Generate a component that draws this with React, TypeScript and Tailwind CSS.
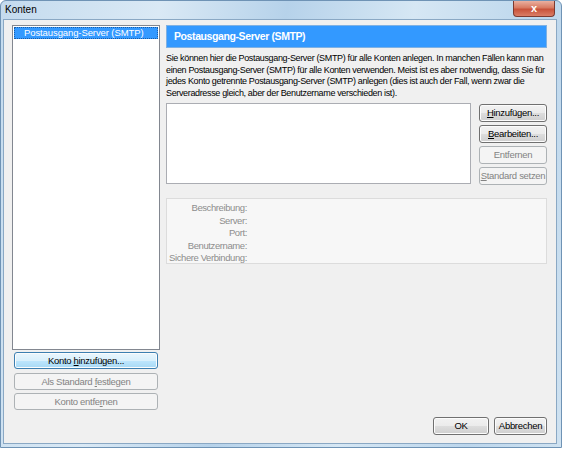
import type { ReactNode } from 'react';

const font = { fontFamily: '"Liberation Sans", Arial, sans-serif' };

type BtnProps = {
  children: ReactNode;
  disabled?: boolean;
  hot?: boolean;
  className?: string;
};

function Btn({ children, disabled, hot, className = '' }: BtnProps) {
  let look =
    'border-[#707070] text-black bg-[linear-gradient(#f2f2f2_0%,#ebebeb_50%,#dddddd_51%,#cfcfcf_100%)] shadow-[inset_0_0_0_1px_#fcfcfc]';
  if (hot)
    look =
      'border-[#3c7fb1] text-black bg-[linear-gradient(#eaf6fd_0%,#d9f0fc_50%,#bee6fd_51%,#a7d9f5_100%)] shadow-[inset_0_0_0_1px_#fcfcfc]';
  if (disabled) look = 'border-[#adb2b5] text-[#838383] bg-[#f4f4f4]';
  return (
    <div className={`flex items-center justify-center rounded-[3px] border text-[9.5px] leading-none ${look} ${className}`}>
      <span className="whitespace-nowrap">{children}</span>
    </div>
  );
}

const U = ({ children }: { children: ReactNode }) => <span className="underline underline-offset-1">{children}</span>;

export default function App() {
  const desc = [
    'Sie können hier die Postausgang-Server (SMTP) für alle Konten anlegen. In manchen Fällen kann man',
    'einen Postausgang-Server (SMTP) für alle Konten verwenden. Meist ist es aber notwendig, dass Sie für',
    'jedes Konto getrennte Postausgang-Server (SMTP) anlegen (dies ist auch der Fall, wenn zwar die',
    'Serveradresse gleich, aber der Benutzername verschieden ist).',
  ];
  const labels = ['Beschreibung:', 'Server:', 'Port:', 'Benutzername:', 'Sichere Verbindung:'];

  return (
    <div className="h-[450px] w-[564px] overflow-hidden bg-white tracking-[-0.3px]" style={font}>
      <div className="flex h-[448px] w-[562px] flex-col rounded-t-[6px] border border-[#6f93b5] bg-[linear-gradient(100deg,#c4dbee_0%,#dae9f5_25%,#b6d2ea_45%,#d6e7f4_65%,#bcd6ec_85%,#cfe2f1_100%)]">
        <div className="flex h-[18px] shrink-0 items-start justify-between pl-[4px] pr-[6px]">
          <span className="pt-[4px] text-[10px] leading-none tracking-normal text-black">Konten</span>
          <div className="flex h-[16px] w-[42px] items-center justify-center rounded-b-[4px] border border-t-0 border-[#7d3a30] bg-[linear-gradient(#eab0a0_0%,#d87a62_45%,#c8523a_55%,#da7d66_100%)]">
            <span className="text-[11px] font-bold leading-none text-white">x</span>
          </div>
        </div>
        <div className="mb-[3px] ml-[2px] mr-[4px] flex min-h-0 flex-1 gap-[6px] border border-[#8aa8c4] bg-[#f0f0f0] pb-[8px] pl-[8px] pr-[9px] pt-[5px]">
          <div className="flex w-[148px] shrink-0 flex-col">
            <div className="h-[325px] border border-[#828790] bg-white p-px">
              <div className="flex h-[12px] items-center whitespace-nowrap border border-dotted border-[#1a5ea8] bg-[#3399ff] pl-[9px] text-[9.5px] leading-none tracking-[-0.1px] text-white">
                Postausgang-Server (SMTP)
              </div>
            </div>
            <Btn hot className="mx-[2px] mt-[2px] h-[17px]">
              Konto <U>h</U>inzufügen...
            </Btn>
            <Btn disabled className="mx-[2px] mt-[4px] h-[17px]">
              Als Standard <U>f</U>estlegen
            </Btn>
            <Btn disabled className="mx-[2px] mt-[3px] h-[17px]">
              Konto entfe<U>r</U>nen
            </Btn>
          </div>
          <div className="flex min-w-0 flex-1 flex-col">
            <div className="flex h-[23px] items-center border border-[#7fb1e3] bg-[#3399ff] pl-[7px] text-[10.5px] font-bold leading-none tracking-[-0.4px] text-white">
              Postausgang-Server (SMTP)
            </div>
            <div className="mt-[5px] text-[9px] leading-[11.5px] tracking-[-0.35px] text-black">
              {desc.map((l) => (
                <div key={l} className="whitespace-nowrap">
                  {l}
                </div>
              ))}
            </div>
            <div className="mt-[4px] flex gap-[8px]">
              <div className="h-[81px] flex-1 border border-[#abadb3] bg-white" />
              <div className="flex w-[68px] flex-col gap-[3px] pt-px">
                <Btn className="h-[18px]">
                  <U>H</U>inzufügen...
                </Btn>
                <Btn className="h-[18px]">
                  <U>B</U>earbeiten...
                </Btn>
                <Btn disabled className="h-[18px]">
                  Entfernen
                </Btn>
                <Btn disabled className="h-[18px]">
                  <U>S</U>tandard setzen
                </Btn>
              </div>
            </div>
            <div className="mt-[13px] h-[66px] border border-[#dcdcdc] bg-[#f7f7f7] pt-[3px]">
              {labels.map((l) => (
                <div key={l} className="w-[80px] whitespace-nowrap text-right text-[9.5px] leading-[12.6px] tracking-[-0.4px] text-[#8d8d8d]">
                  {l}
                </div>
              ))}
            </div>
            <div className="flex-1" />
            <div className="flex justify-end gap-[5px]">
              <Btn className="h-[18px] w-[56px] border-[#3c7fb1]">OK</Btn>
              <Btn className="h-[18px] w-[53px]">Abbrechen</Btn>
            </div>
          </div>
        </div>
      </div>
    </div>
  );
}
